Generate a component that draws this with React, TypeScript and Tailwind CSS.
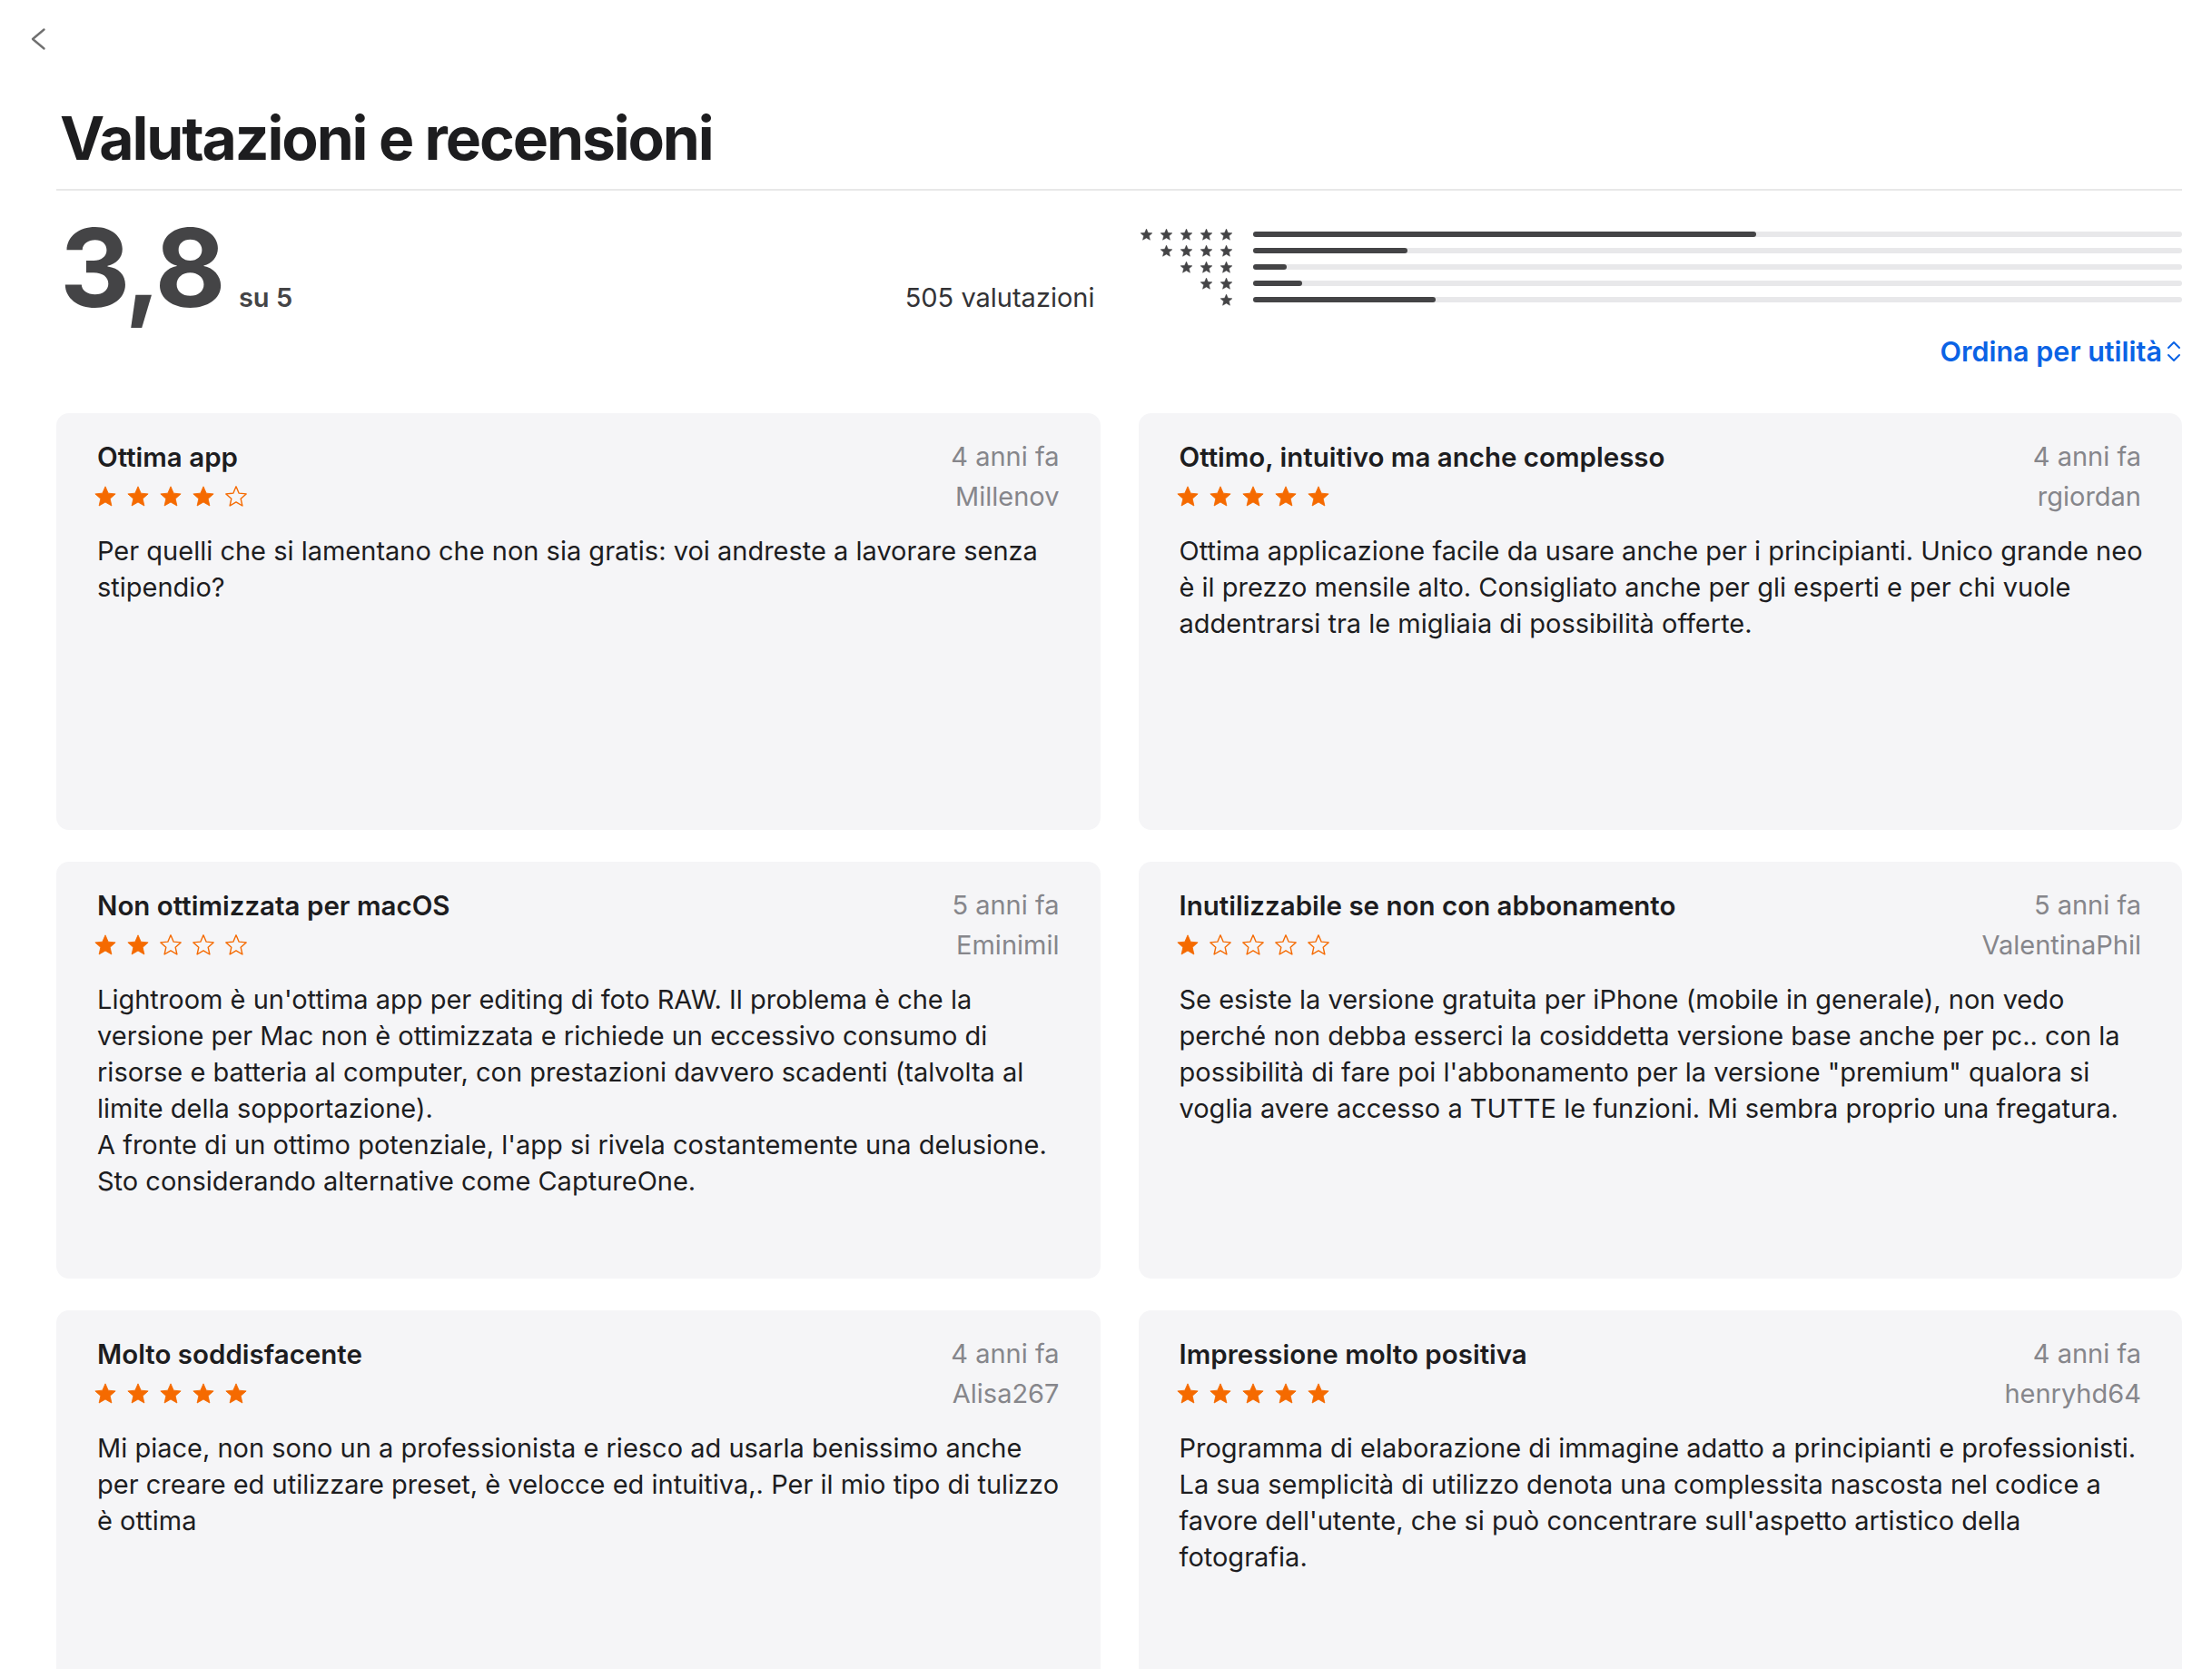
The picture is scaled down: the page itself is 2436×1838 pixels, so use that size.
import React from "react";

type Review = {
  title: string;
  date: string;
  author: string;
  rating: number;
  lines: string[];
};

const reviews: Review[] = [
  {
    title: "Ottima app",
    date: "4 anni fa",
    author: "Millenov",
    rating: 4,
    lines: [
      "Per quelli che si lamentano che non sia gratis: voi andreste a lavorare senza",
      "stipendio?",
    ],
  },
  {
    title: "Ottimo, intuitivo ma anche complesso",
    date: "4 anni fa",
    author: "rgiordan",
    rating: 5,
    lines: [
      "Ottima applicazione facile da usare anche per i principianti. Unico grande neo",
      "è il prezzo mensile alto. Consigliato anche per gli esperti e per chi vuole",
      "addentrarsi tra le migliaia di possibilità offerte.",
    ],
  },
  {
    title: "Non ottimizzata per macOS",
    date: "5 anni fa",
    author: "Eminimil",
    rating: 2,
    lines: [
      "Lightroom è un'ottima app per editing di foto RAW. Il problema è che la",
      "versione per Mac non è ottimizzata e richiede un eccessivo consumo di",
      "risorse e batteria al computer, con prestazioni davvero scadenti (talvolta al",
      "limite della sopportazione).",
      "A fronte di un ottimo potenziale, l'app si rivela costantemente una delusione.",
      "Sto considerando alternative come CaptureOne.",
    ],
  },
  {
    title: "Inutilizzabile se non con abbonamento",
    date: "5 anni fa",
    author: "ValentinaPhil",
    rating: 1,
    lines: [
      "Se esiste la versione gratuita per iPhone (mobile in generale), non vedo",
      "perché non debba esserci la cosiddetta versione base anche per pc.. con la",
      "possibilità di fare poi l'abbonamento per la versione \"premium\" qualora si",
      "voglia avere accesso a TUTTE le funzioni. Mi sembra proprio una fregatura.",
    ],
  },
  {
    title: "Molto soddisfacente",
    date: "4 anni fa",
    author: "Alisa267",
    rating: 5,
    lines: [
      "Mi piace, non sono un a professionista e riesco ad usarla benissimo anche",
      "per creare ed utilizzare preset, è velocce ed intuitiva,. Per il mio tipo di tulizzo",
      "è ottima",
    ],
  },
  {
    title: "Impressione molto positiva",
    date: "4 anni fa",
    author: "henryhd64",
    rating: 5,
    lines: [
      "Programma di elaborazione di immagine adatto a principianti e professionisti.",
      "La sua semplicità di utilizzo denota una complessita nascosta nel codice a",
      "favore dell'utente, che si può concentrare sull'aspetto artistico della",
      "fotografia.",
    ],
  },
];

// percent of ratings per star count, 5 -> 1
const distribution = [54.2, 16.7, 3.7, 5.3, 19.7];

const STAR_POINTS =
  "12,1.7 14.94,8.46 22.27,9.16 16.76,14.05 18.35,21.24 12,17.5 5.65,21.24 7.24,14.05 1.73,9.16 9.06,8.46";

function Star({ filled, className }: { filled: boolean; className?: string }) {
  return (
    <svg viewBox="0 0 24 24" className={className}>
      <polygon
        points={STAR_POINTS}
        fill={filled ? "currentColor" : "none"}
        stroke="currentColor"
        strokeWidth={filled ? 0.8 : 1.3}
        strokeLinejoin="round"
      />
    </svg>
  );
}

function Stars({ rating }: { rating: number }) {
  return (
    <div className="-ml-[4px] flex items-center gap-[10px] text-[#f56a00]">
      {[1, 2, 3, 4, 5].map((i) => (
        <Star key={i} filled={i <= rating} className="size-[26px]" />
      ))}
    </div>
  );
}

function ReviewCard({ review }: { review: Review }) {
  return (
    <div className="h-[459px] overflow-hidden rounded-[14px] bg-[#f5f5f7] px-[45px] pt-[30px]">
      <div className="flex h-[36px] items-center justify-between">
        <span className="text-[29.5px] leading-[36px] font-semibold text-[#1d1d1f]">
          {review.title}
        </span>
        <span className="text-[29px] leading-[36px] text-[#86868b]">
          {review.date}
        </span>
      </div>
      <div className="mt-[8px] flex h-[36px] items-center justify-between">
        <Stars rating={review.rating} />
        <span className="text-[29px] leading-[36px] text-[#86868b]">
          {review.author}
        </span>
      </div>
      <div className="mt-[22px] text-[29px] leading-[40px] text-[#1d1d1f]">
        {review.lines.map((line, i) => (
          <div key={i} className="whitespace-nowrap">
            {line}
          </div>
        ))}
      </div>
    </div>
  );
}

function Histogram() {
  return (
    <div className="flex flex-col pt-[14px]">
      {distribution.map((pct, idx) => {
        const count = 5 - idx;
        return (
          <div key={count} className="flex h-[18px] items-center">
            <div className="flex w-[104px] justify-end gap-[7px] text-[#444446]">
              {Array.from({ length: count }).map((_, i) => (
                <Star key={i} filled className="size-[15px]" />
              ))}
            </div>
            <div className="ml-[22px] h-[6px] flex-1 rounded-full bg-[#e8e8ea]">
              <div
                className="h-full rounded-full bg-[#444446]"
                style={{ width: `${pct}%` }}
              />
            </div>
          </div>
        );
      })}
    </div>
  );
}

export default function App() {
  return (
    <div className="min-h-screen bg-white font-['Inter','Noto_Sans',sans-serif] antialiased">
      <div className="h-[112px] pl-[33px] pt-[30px]">
        <svg viewBox="0 0 18 26" className="h-[26px] w-[18px]">
          <path
            d="M15.5 2.5 L3 13 L15.5 23.5"
            fill="none"
            stroke="#707070"
            strokeWidth="2.4"
            strokeLinecap="round"
            strokeLinejoin="round"
          />
        </svg>
      </div>

      <div className="pl-[62px] pr-[33px]">
        <h1 className="pl-[4px] text-[66px] leading-[80px] font-bold tracking-[-0.032em] text-[#1d1d1f]">
          Valutazioni e recensioni
        </h1>
        <div className="mt-[16px] h-[2px] bg-[#e8e8e8]" />

        <div className="mt-[25px] grid grid-cols-2 gap-x-[42px]">
          <div className="flex items-baseline justify-between">
            <div className="flex items-baseline">
              <span className="pl-[4px] text-[120px] leading-[120px] font-bold tracking-[-0.03em] text-[#444446]">
                3,8
              </span>
              <span className="ml-[18px] text-[29px] font-semibold text-[#444446]">
                su 5
              </span>
            </div>
            <span className="pr-[6px] text-[29px] text-[#333336]">
              505 valutazioni
            </span>
          </div>
          <Histogram />
        </div>

        <div className="mt-[14px] flex justify-end">
          <button className="flex items-center gap-[4px] text-[30.5px] leading-[36px] font-semibold text-[#0b63e5]">
            <span>Ordina per utilità</span>
            <svg viewBox="0 0 18 26" className="h-[26px] w-[18px]">
              <path
                d="M3 9 L9 3 L15 9 M3 17 L9 23 L15 17"
                fill="none"
                stroke="currentColor"
                strokeWidth="2"
                strokeLinecap="round"
                strokeLinejoin="round"
              />
            </svg>
          </button>
        </div>

        <div className="mt-[50px] grid grid-cols-2 gap-x-[42px] gap-y-[35px]">
          {reviews.map((r) => (
            <ReviewCard key={r.title} review={r} />
          ))}
        </div>
      </div>
    </div>
  );
}
